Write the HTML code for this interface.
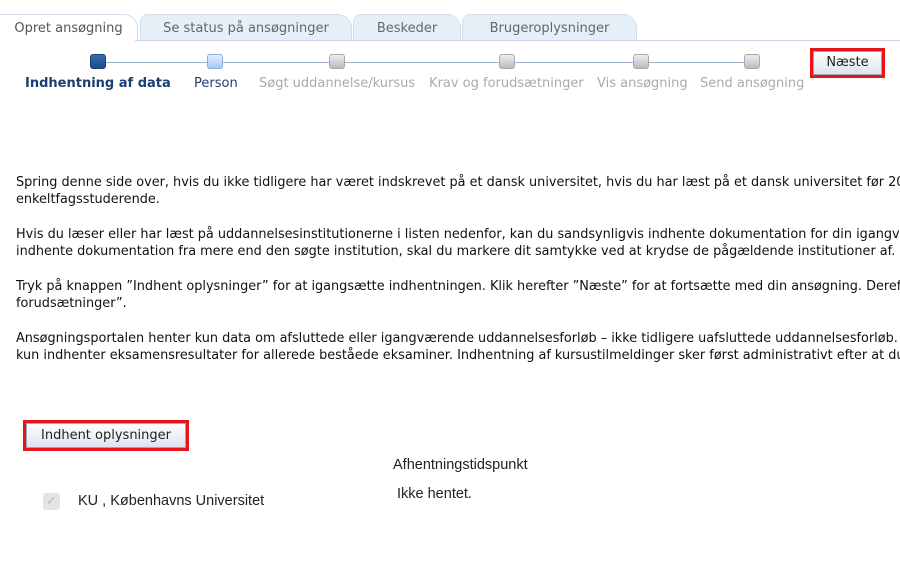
<!DOCTYPE html>
<html><head><meta charset="utf-8"><style>
*{margin:0;padding:0;box-sizing:border-box}
html,body{width:900px;height:568px;overflow:hidden}
body{background:#fff;font-family:"DejaVu Sans","Liberation Sans",sans-serif;position:relative;color:#111}
.tab{position:absolute;top:14px;height:27px;background:#e6eef7;border:1px solid #d3deea;border-bottom:none;border-radius:8px 14px 0 0;font-size:13px;color:#666;text-align:center;line-height:27px}
.tab.a{background:#fff;color:#555;border-color:#d3deea}
.bl{position:absolute;top:40px;left:135px;right:0;height:1px;background:#c9d6e6}
.line{position:absolute;top:62px;left:98px;width:654px;height:1px;background:#9fb0d0}
.sb{position:absolute;top:54px;width:16px;height:15px;border-radius:3px;background:linear-gradient(#eee,#bbb);border:1px solid #aaa}
.lb{position:absolute;top:76px;font-size:13px;color:#aaa;white-space:nowrap}
.btn{position:absolute;border:3px solid #e8141c;}
.btn span{display:block;background:linear-gradient(#fff,#dde3ee);border:1px solid #9aa6bb;font-size:13px;color:#222;text-align:center}
p{position:absolute;left:16px;right:0;overflow:hidden;font-size:12.85px;line-height:17px;white-space:nowrap;color:#111}
.ls{position:absolute;font-size:14.5px;font-family:'Liberation Sans',sans-serif;color:#222;white-space:nowrap}
</style></head><body>
<div class="tab a" style="left:0;width:138px;border-left:none;border-radius:0 14px 0 0">Opret ansøgning</div>
<div class="tab" style="left:140px;width:212px">Se status på ansøgninger</div>
<div class="tab" style="left:353px;width:108px">Beskeder</div>
<div class="tab" style="left:462px;width:175px">Brugeroplysninger</div>
<div class="bl"></div>
<div class="line"></div>
<div class="sb" style="left:90px;background:linear-gradient(#3a6cb0,#1d4a8a);border-color:#1d3f75"></div>
<div class="sb" style="left:207px;background:linear-gradient(#e4eeff,#a9c6f5);border-color:#8aaee6"></div>
<div class="sb" style="left:329px"></div>
<div class="sb" style="left:499px"></div>
<div class="sb" style="left:633px"></div>
<div class="sb" style="left:744px"></div>
<div class="lb" style="left:25px;color:#1c3e73;font-weight:bold">Indhentning af data</div>
<div class="lb" style="left:194px;color:#1c3e73">Person</div>
<div class="lb" style="left:259px">Søgt uddannelse/kursus</div>
<div class="lb" style="left:429px">Krav og forudsætninger</div>
<div class="lb" style="left:597px">Vis ansøgning</div>
<div class="lb" style="left:700px">Send ansøgning</div>
<div class="btn" style="left:810px;top:48px;width:75px;height:30px"><span style="height:24px;line-height:22px">Næste</span></div>
<p style="top:174px">Spring denne side over, hvis du ikke tidligere har været indskrevet på et dansk universitet, hvis du har læst på et dansk universitet før 2007 eller hvis du er<br>enkeltfagsstuderende.</p>
<p style="top:226px">Hvis du læser eller har læst på uddannelsesinstitutionerne i listen nedenfor, kan du sandsynligvis indhente dokumentation for din igangværende uddannelse. Ønsker du at<br>indhente dokumentation fra mere end den søgte institution, skal du markere dit samtykke ved at krydse de pågældende institutioner af.</p>
<p style="top:278px">Tryk på knappen ”Indhent oplysninger” for at igangsætte indhentningen. Klik herefter ”Næste” for at fortsætte med din ansøgning. Derefter ”Krav og<br>forudsætninger”.</p>
<p style="top:330px">Ansøgningsportalen henter kun data om afsluttede eller igangværende uddannelsesforløb – ikke tidligere uafsluttede uddannelsesforløb. Bemærk at vi<br>kun indhenter eksamensresultater for allerede beståede eksaminer. Indhentning af kursustilmeldinger sker først administrativt efter at du har søgt.</p>
<div class="btn" style="left:23px;top:420px;width:166px;height:31px"><span style="height:25px;line-height:23px">Indhent oplysninger</span></div>
<div class="ls" style="left:393px;top:457px">Afhentningstidspunkt</div>
<div style="position:absolute;left:43px;top:493px;width:17px;height:17px;border-radius:3px;background:#e4e4e4;color:#bbb;font-size:13px;line-height:17px;text-align:center">✓</div>
<div class="ls" style="left:78px;top:493px">KU , Københavns Universitet</div>
<div class="ls" style="left:397px;top:486px">Ikke hentet.</div>
</body></html>
